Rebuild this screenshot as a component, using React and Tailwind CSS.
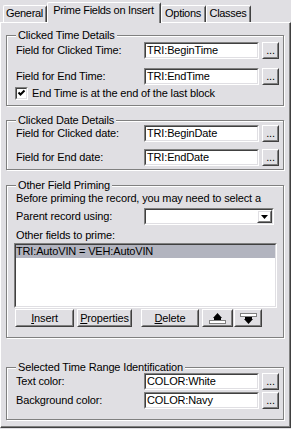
import React from "react"

// classic 3D edges
function Sunken({ className = "", children }) {
  return (
    <div className={`border border-t-[#808080] border-l-[#808080] border-r-white border-b-white ${className}`}>
      <div className="h-full border border-t-[#404040] border-l-[#404040] border-r-[#e0dfe3] border-b-[#e0dfe3] bg-white overflow-hidden">
        {children}
      </div>
    </div>
  )
}

function Raised({ className = "", children }) {
  return (
    <div className={`border border-t-white border-l-white border-r-[#404040] border-b-[#404040] ${className}`}>
      <div className="h-full border border-t-[#e0dfe3] border-l-[#e0dfe3] border-r-[#808080] border-b-[#808080] flex items-center justify-center">
        {children}
      </div>
    </div>
  )
}

function Group({ title, className = "", children }) {
  return (
    <fieldset className={`w-[278px] border border-[#808080] shadow-[1px_1px_0_#fff,inset_1px_1px_0_#fff] pl-[9px] ${className}`}>
      <legend className="px-[2px] bg-[#e0dfe3] leading-[13px]">{title}</legend>
      {children}
    </fieldset>
  )
}

function FieldRow({ label, value, className = "" }) {
  return (
    <div className={`flex items-center h-[17px] ${className}`}>
      <div className="w-[128px] whitespace-nowrap">{label}</div>
      <Sunken className="w-[115px] h-[17px]">
        <div className="pl-[1px] leading-[13px] whitespace-nowrap">{value}</div>
      </Sunken>
      <Raised className="ml-[3px] w-[17px] h-[17px]">
        <span className="leading-[13px]">...</span>
      </Raised>
    </div>
  )
}

function Tab({ label, active, width }) {
  return (
    <div
      className={`${width} ${active ? "h-[21px] mb-[-1px] relative z-10 pt-[1px]" : "h-[17px] pt-[1px]"} border-t border-l border-r border-t-white border-l-white border-r-[#404040] rounded-t-[2px] bg-[#e0dfe3]`}
    >
      <div className="h-full border-r border-[#808080] flex justify-center whitespace-nowrap leading-[13px] tracking-[-0.3px]">
        {label}
      </div>
    </div>
  )
}

function UpIcon() {
  return (
    <svg width="17" height="11" viewBox="0 0 17 11">
      <polygon points="8.5,0 4,5 13,5" fill="#000" />
      <rect x="5" y="5" width="7" height="2" fill="#000" />
      <rect x="0.5" y="7.5" width="16" height="3" fill="#fff" stroke="#808080" />
    </svg>
  )
}

function DownIcon() {
  return (
    <svg width="17" height="11" viewBox="0 0 17 11">
      <rect x="0.5" y="0.5" width="16" height="3" fill="#fff" stroke="#808080" />
      <rect x="5" y="4" width="7" height="2" fill="#000" />
      <polygon points="4,6 13,6 8.5,11" fill="#000" />
    </svg>
  )
}

export default function App() {
  return (
    <div className="w-[291px] h-[429px] bg-[#e0dfe3] text-black text-[11px] leading-[13px] tracking-[-0.15px] font-['Liberation_Sans',Arial,sans-serif] overflow-hidden select-none">
      {/* Tabs */}
      <div className="flex items-end h-[22px] pl-[3px]">
        <Tab label="General" width="w-[44px]" />
        <Tab label="Prime Fields on Insert" width="w-[114px]" active />
        <Tab label="Options" width="w-[45px]" />
        <Tab label="Classes" width="w-[45px]" />
      </div>

      {/* Page */}
      <div className="w-[291px] h-[406px] border border-t-white border-l-white border-r-[#404040] border-b-[#404040]">
        <div className="h-full border-r border-b border-[#808080] pl-[5px] pt-[6px] flex flex-col">
          <Group title="Clicked Time Details" className="h-[77px]">
            <FieldRow label="Field for Clicked Time:" value="TRI:BeginTime" />
            <FieldRow label="Field for End Time:" value="TRI:EndTime" className="mt-[9px]" />
            <div className="flex items-center h-[13px] mt-[2px]">
              <Sunken className="ml-[-1px] w-[13px] h-[13px]">
                <svg width="9" height="9" viewBox="0 0 9 9" className="block">
                  <path d="M1.5 3.5 L3.5 5.5 L7.5 1.5" fill="none" stroke="#000" strokeWidth="2" />
                </svg>
              </Sunken>
              <span className="ml-[4px] whitespace-nowrap">End Time is at the end of the last block</span>
            </div>
          </Group>

          <Group title="Clicked Date Details" className="h-[56px] mt-[8px]">
            <FieldRow label="Field for Clicked date:" value="TRI:BeginDate" className="mt-[-2px]" />
            <FieldRow label="Field for End date:" value="TRI:EndDate" className="mt-[7px]" />
          </Group>

          <Group title="Other Field Priming" className="h-[159px] mt-[9px]">
            <div className="whitespace-nowrap">Before priming the record, you may need to select a</div>
            <div className="flex items-center h-[17px] mt-[3px]">
              <div className="w-[128px] whitespace-nowrap">Parent record using:</div>
              <Sunken className="w-[130px] h-[17px]">
                <div className="h-full flex justify-end">
                  <Raised className="w-[15px] h-full">
                    <svg width="7" height="4" viewBox="0 0 7 4">
                      <polygon points="0,0 7,0 3.5,4" fill="#000" />
                    </svg>
                  </Raised>
                </div>
              </Sunken>
            </div>
            <div className="mt-[4px] whitespace-nowrap">Other fields to prime:</div>
            <Sunken className="mt-[1px] ml-[-2px] w-[263px] h-[65px]">
              <div className="h-[13px] leading-[13px] bg-[#b2b4bf] whitespace-nowrap">TRI:AutoVIN = VEH:AutoVIN</div>
            </Sunken>
            <div className="flex h-[18px] mt-[1px]">
              <Raised className="ml-[-1px] w-[59px] h-[18px]">
                <span><span className="underline">I</span>nsert</span>
              </Raised>
              <Raised className="ml-[3px] w-[55px] h-[18px]">
                <span><span className="underline">P</span>roperties</span>
              </Raised>
              <Raised className="ml-[9px] w-[58px] h-[18px]">
                <span><span className="underline">D</span>elete</span>
              </Raised>
              <Raised className="ml-[3px] w-[31px] h-[18px]">
                <UpIcon />
              </Raised>
              <Raised className="ml-[1px] w-[28px] h-[18px]">
                <DownIcon />
              </Raised>
            </div>
          </Group>

          <Group title="Selected Time Range Identification" className="h-[59px] mt-[23px]">
            <FieldRow label="Text color:" value="COLOR:White" className="mt-[-1px]" />
            <FieldRow label="Background color:" value="COLOR:Navy" className="mt-[2px]" />
          </Group>
        </div>
      </div>
    </div>
  )
}
